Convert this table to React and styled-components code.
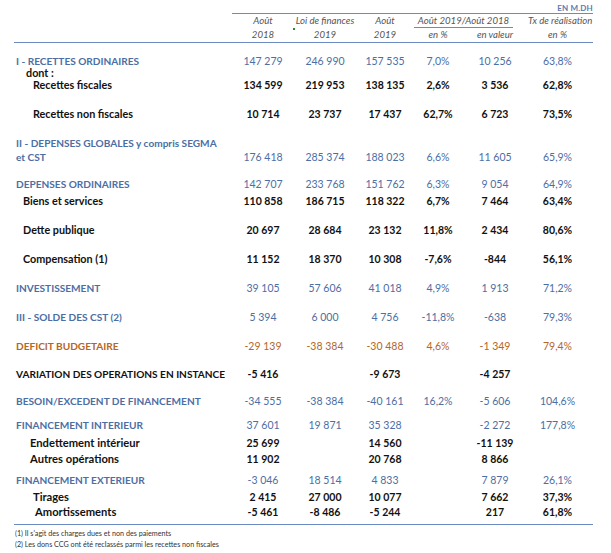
import React from 'react';
import styled, { createGlobalStyle } from 'styled-components';

const GlobalStyle = createGlobalStyle`
  body {
    margin: 0;
    background: #ffffff;
    font-family: Lato, "Open Sans", "Liberation Sans", sans-serif;
  }
`;

const COLS = '218px 62px 62px 58px 48px 66px 65px';
const BLUE = '#4c6ea4';
const LINE = '#6c8bc2';
const ORANGE = '#b5661f';

const Page = styled.div`
  width: 611px;
  height: 553px;
  padding: 3px 0 0 14px;
  box-sizing: border-box;
`;

const Unit = styled.div`
  width: 579px;
  text-align: right;
  font-size: 8px;
  font-weight: 700;
  color: #5a7ab0;
  line-height: 10px;
  letter-spacing: 0.2px;
`;

const Header = styled.div`
  display: grid;
  grid-template-columns: ${COLS};
  width: 579px;
  border-bottom: 1px solid ${LINE};
  margin-bottom: 11px;
`;

const HeadGroup = styled.div`
  grid-column: 2 / span 6;
  display: grid;
  grid-template-columns: 62px 62px 58px 48px 66px 65px;
  border-top: 1px solid ${LINE};
`;

const HeadCell = styled.div`
  position: relative;
  text-align: center;
  font-style: italic;
  font-size: 9.6px;
  color: #555;
  line-height: 14px;
  white-space: nowrap;
  grid-column: ${(p) => p.$span || 'auto'};
  ${(p) => p.$shift && `padding-right: ${p.$shift}px;`}
  ${(p) => p.$rule && `
    border-bottom: 1px solid ${LINE};
    margin-right: 15px;
    line-height: 13px;
  `}
`;

const Marker = styled.span`
  position: absolute;
  left: -1px;
  top: 14px;
  width: 2px;
  height: 2px;
  background: #2f8a2f;
`;

const Row = styled.div`
  display: grid;
  grid-template-columns: ${COLS};
  width: 579px;
  height: ${(p) => p.$h}px;
  align-items: start;
  ${(p) => p.$last && `border-bottom: 1px solid ${LINE}; box-sizing: content-box;`}
`;

const colorFor = (kind) =>
  kind === 'section' ? BLUE : kind === 'deficit' ? ORANGE : '#111';

const tightCss = (p) => (p.$tight ? `line-height: 11px; padding-top: 2px;` : 'line-height: 14px;');

const Label = styled.div`
  padding-left: ${(p) => p.$indent || 2}px;
  font-size: ${(p) => p.$size}px;
  font-weight: 700;
  ${tightCss}
  color: ${(p) => colorFor(p.$kind)};
  white-space: nowrap;
`;

const Num = styled.div`
  text-align: center;
  font-size: 10.5px;
  ${tightCss}
  font-weight: ${(p) => (p.$kind === 'section' || p.$kind === 'deficit' ? 400 : 700)};
  color: ${(p) => colorFor(p.$kind)};
  align-self: ${(p) => (p.$mid ? 'center' : 'start')};
  white-space: nowrap;
  ${(p) => p.$last && 'padding-right: 6px;'}
`;

const Notes = styled.div`
  padding: 3px 0 0 1px;
  font-size: 7.2px;
  line-height: 11px;
  color: #333;
`;

const rows = [
  { label: 'I - RECETTES ORDINAIRES', kind: 'section', tight: true, h: 11, vals: ['147 279', '246 990', '157 535', '7,0%', '10 256', '63,8%'] },
  { label: 'dont :', kind: 'sub', indent: 12, tight: true, h: 13, vals: [] },
  { label: 'Recettes fiscales', kind: 'sub', indent: 19, h: 29, vals: ['134 599', '219 953', '138 135', '2,6%', '3 536', '62,8%'] },
  { label: 'Recettes non fiscales', kind: 'sub', indent: 19, h: 29, vals: ['10 714', '23 737', '17 437', '62,7%', '6 723', '73,5%'] },
  { label: ['II - DEPENSES GLOBALES y compris SEGMA', 'et CST'], kind: 'section', h: 41, mid: true, vals: ['176 418', '285 374', '188 023', '6,6%', '11 605', '65,9%'] },
  { label: 'DEPENSES ORDINAIRES', kind: 'section', h: 17, vals: ['142 707', '233 768', '151 762', '6,3%', '9 054', '64,9%'] },
  { label: 'Biens et services', kind: 'sub', indent: 9, h: 29, vals: ['110 858', '186 715', '118 322', '6,7%', '7 464', '63,4%'] },
  { label: 'Dette publique', kind: 'sub', indent: 9, h: 29, vals: ['20 697', '28 684', '23 132', '11,8%', '2 434', '80,6%'] },
  { label: 'Compensation (1)', kind: 'sub', indent: 9, h: 29, vals: ['11 152', '18 370', '10 308', '-7,6%', '-844', '56,1%'] },
  { label: 'INVESTISSEMENT', kind: 'section', h: 29, vals: ['39 105', '57 606', '41 018', '4,9%', '1 913', '71,2%'] },
  { label: 'III - SOLDE DES CST (2)', kind: 'section', h: 29, vals: ['5 394', '6 000', '4 756', '-11,8%', '-638', '79,3%'] },
  { label: 'DEFICIT BUDGETAIRE', kind: 'deficit', h: 28, vals: ['-29 139', '-38 384', '-30 488', '4,6%', '-1 349', '79,4%'] },
  { label: 'VARIATION DES OPERATIONS EN INSTANCE', kind: 'sub', caps: true, h: 27, vals: ['-5 416', '', '-9 673', '', '-4 257', ''] },
  { label: 'BESOIN/EXCEDENT DE FINANCEMENT', kind: 'section', h: 24, vals: ['-34 555', '-38 384', '-40 161', '16,2%', '-5 606', '104,6%'] },
  { label: 'FINANCEMENT INTERIEUR', kind: 'section', h: 18, vals: ['37 601', '19 871', '35 328', '', '-2 272', '177,8%'] },
  { label: 'Endettement intérieur', kind: 'sub', indent: 16, big: true, h: 16, vals: ['25 699', '', '14 560', '', '-11 139', ''] },
  { label: 'Autres opérations', kind: 'sub', indent: 16, big: true, h: 21, vals: ['11 902', '', '20 768', '', '8 866', ''] },
  { label: 'FINANCEMENT EXTERIEUR', kind: 'section', h: 17, vals: ['-3 046', '18 514', '4 833', '', '7 879', '26,1%'] },
  { label: 'Tirages', kind: 'sub', indent: 19, big: true, h: 15, vals: ['2 415', '27 000', '10 077', '', '7 662', '37,3%'] },
  { label: 'Amortissements', kind: 'sub', indent: 21, big: true, h: 19, last: true, vals: ['-5 461', '-8 486', '-5 244', '', '217', '61,8%'] },
];

const labelSize = (row) => {
  if (row.big) return 11.2;
  if (row.kind === 'sub' && !row.caps) return 10.8;
  return 10.1;
};

function TableRow({ row }) {
  const vals = row.vals.length ? row.vals : ['', '', '', '', '', ''];
  return (
    <Row $h={row.h} $last={row.last}>
      <Label $kind={row.kind} $indent={row.indent} $size={labelSize(row)} $tight={row.tight}>
        {Array.isArray(row.label)
          ? row.label.map((l) => <div key={l}>{l}</div>)
          : row.label}
      </Label>
      {vals.map((v, i) => (
        <Num key={i} $kind={row.kind} $mid={row.mid} $last={i === 5} $tight={row.tight}>
          {v}
        </Num>
      ))}
    </Row>
  );
}

export default function App() {
  return (
    <Page>
      <GlobalStyle />
      <Unit>EN M.DH</Unit>
      <Header>
        <div />
        <HeadGroup>
          <HeadCell>Août</HeadCell>
          <HeadCell>
            Loi de finances
            <Marker />
          </HeadCell>
          <HeadCell>Août</HeadCell>
          <HeadCell $span="span 2" $rule>
            Août 2019/Août 2018
          </HeadCell>
          <HeadCell $shift={6}>Tx de réalisation</HeadCell>
          <HeadCell>2018</HeadCell>
          <HeadCell>2019</HeadCell>
          <HeadCell>2019</HeadCell>
          <HeadCell>en %</HeadCell>
          <HeadCell>en valeur</HeadCell>
          <HeadCell $shift={6}>en %</HeadCell>
        </HeadGroup>
      </Header>
      {rows.map((row, i) => (
        <TableRow key={i} row={row} />
      ))}
      <Notes>
        <div>(1) Il s'agit des charges dues et non des paiements</div>
        <div>(2) Les dons CCG ont été reclassés parmi les recettes non fiscales</div>
      </Notes>
    </Page>
  );
}
